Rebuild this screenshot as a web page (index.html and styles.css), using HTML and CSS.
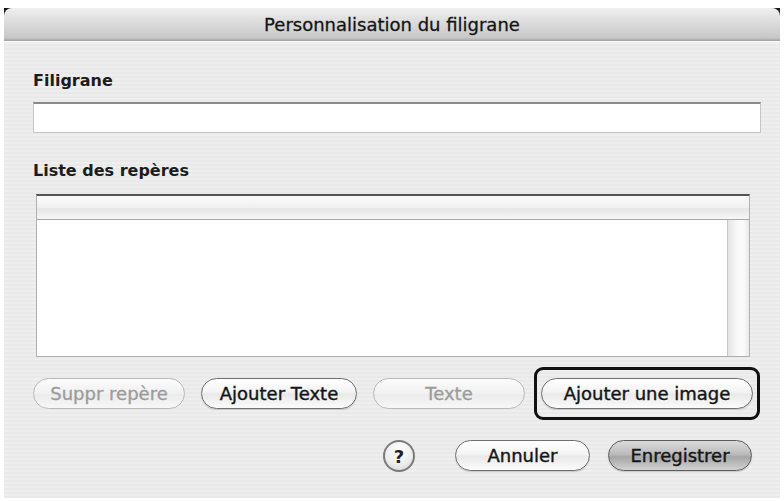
FILE: index.html
```html
<!DOCTYPE html>
<html lang="fr">
<head>
<meta charset="UTF-8" />
<title>Personnalisation du filigrane</title>
<link rel="stylesheet" href="styles.css">
</head>
<body>
  <div class="window" role="dialog" aria-label="Personnalisation du filigrane">
    <div class="titlebar">Personnalisation du filigrane</div>
    <div class="content">
      <label class="field-label" for="watermark">Filigrane</label>
      <input type="text" id="watermark" class="text-field" />

      <div class="field-label list-label">Liste des repères</div>
      <div class="list-box">
        <div class="list-header"></div>
        <div class="list-body">
          <div class="list-rows"></div>
          <div class="scroll-track"></div>
        </div>
      </div>

      <div class="button-row">
        <button class="btn btn-suppr" disabled>Suppr repère</button>
        <button class="btn btn-add-text">Ajouter Texte</button>
        <button class="btn btn-text" disabled>Texte</button>
        <button class="btn btn-add-image focused">Ajouter une image</button>
      </div>

      <div class="button-row footer-row">
        <button class="help-btn" aria-label="Aide">?</button>
        <button class="btn btn-cancel">Annuler</button>
        <button class="btn btn-save default">Enregistrer</button>
      </div>
    </div>
  </div>
</body>
</html>
```

FILE: styles.css
```css
/* Base */
* {
  box-sizing: border-box;
}
body {
  margin: 0;
  background: #fff;
  font-family: "DejaVu Sans", "Liberation Sans", sans-serif;
  color: #111;
}

/* Dialog window */
.window {
  position: relative;
  width: 776px;
  height: 490px;
  margin: 8px 0 0 4px;
  background: repeating-linear-gradient(#eeeeee 0, #eeeeee 2px, #e9e9e9 2px, #e9e9e9 4px);
  display: flex;
  flex-direction: column;
}
.window::before {
  content: "";
  position: absolute;
  top: 0;
  left: 0;
  right: 0;
  height: 8px;
  background: #1a1a1a;
  z-index: 0;
}
.titlebar {
  position: relative;
  z-index: 1;
  height: 34px;
  border-radius: 8px 8px 0 0;
  background: linear-gradient(#f0f0f0, #dddddd 40%, #c8c8c8 90%, #a0a0a0);
  border-bottom: 1px solid #fbfbfb;
  text-align: center;
  font-size: 18px;
  line-height: 33px;
  color: #141414;
  -webkit-text-stroke: 0.3px #141414;
}
.content {
  position: relative;
  z-index: 1;
  flex: 1;
  display: flex;
  flex-direction: column;
  padding: 29px 19px 27px 29px;
  background: repeating-linear-gradient(#eeeeee 0, #eeeeee 2px, #e9e9e9 2px, #e9e9e9 4px);
}

/* Labels and fields */
.field-label {
  font-weight: bold;
  font-size: 16px;
  line-height: 20px;
  color: #1c1c1c;
}
.text-field {
  margin-top: 11px;
  width: 728px;
  height: 31px;
  border: 1px solid #c4c4c4;
  border-top: 2px solid #8a8a8a;
  background: #fff;
  font: inherit;
  outline: none;
}
.list-label {
  margin-top: 28px;
}

/* Marker list */
.list-box {
  margin: 13px 0 0 3px;
  width: 714px;
  height: 163px;
  border: 1px solid #b0b0b0;
  border-top: 2px solid #555;
  display: flex;
  flex-direction: column;
  background: #fff;
}
.list-header {
  height: 24px;
  background: linear-gradient(#fbfbfb, #f0f0f0 50%, #e6e6e6 55%, #f6f6f6);
  border-bottom: 1px solid #a9a9a9;
}
.list-body {
  flex: 1;
  display: flex;
}
.list-rows {
  flex: 1;
}
.scroll-track {
  width: 22px;
  border-left: 1px solid #c8c8c8;
  background: linear-gradient(90deg, #e4e4e4, #f7f7f7 40%, #fcfcfc 70%, #e8e8e8);
}

/* Buttons */
.button-row {
  display: flex;
  gap: 16px;
  margin-top: 21px;
}
.footer-row {
  margin-top: 31px;
  margin-left: 350px;
  gap: 18px;
}
.btn {
  position: relative;
  height: 31px;
  padding: 0;
  border: 1px solid #6f6f6f;
  border-radius: 16px;
  background: linear-gradient(#ffffff, #f4f4f4 45%, #e9e9e9 52%, #fbfbfb);
  box-shadow: 0 1px 1px rgba(0,0,0,0.15);
  font-family: inherit;
  font-size: 18px;
  color: #151515;
  -webkit-text-stroke: 0.4px #151515;
  cursor: pointer;
}
.btn:disabled {
  border-color: #b9b9b9;
  color: #9b9b9b;
  -webkit-text-stroke: 0.3px #9b9b9b;
  box-shadow: none;
  background: linear-gradient(#fbfbfb, #f1f1f1 50%, #ebebeb 52%, #f7f7f7);
}
.btn-suppr { width: 152px; }
.btn-add-text { width: 156px; }
.btn-text { width: 152px; }
.btn-add-image { width: 212px; }
.btn-cancel { width: 135px; margin-left: 22px; }
.btn-save { width: 144px; }
.btn.default {
  border-color: #5c5c5c;
  background: linear-gradient(#dadada, #bcbcbc 45%, #a6a6a6 55%, #d2d2d2);
}
.btn.focused::after {
  content: "";
  position: absolute;
  top: -12px;
  bottom: -12px;
  left: -8px;
  right: -8px;
  border: 3px solid #111;
  border-radius: 9px;
}
.help-btn {
  width: 32px;
  height: 32px;
  padding: 0;
  border: 2px solid #7a7a7a;
  border-radius: 50%;
  background: radial-gradient(circle at 50% 30%, #ffffff, #ececec 60%, #d2d2d2);
  font-family: inherit;
  font-weight: bold;
  font-size: 18px;
  color: #222;
  cursor: pointer;
}
```
